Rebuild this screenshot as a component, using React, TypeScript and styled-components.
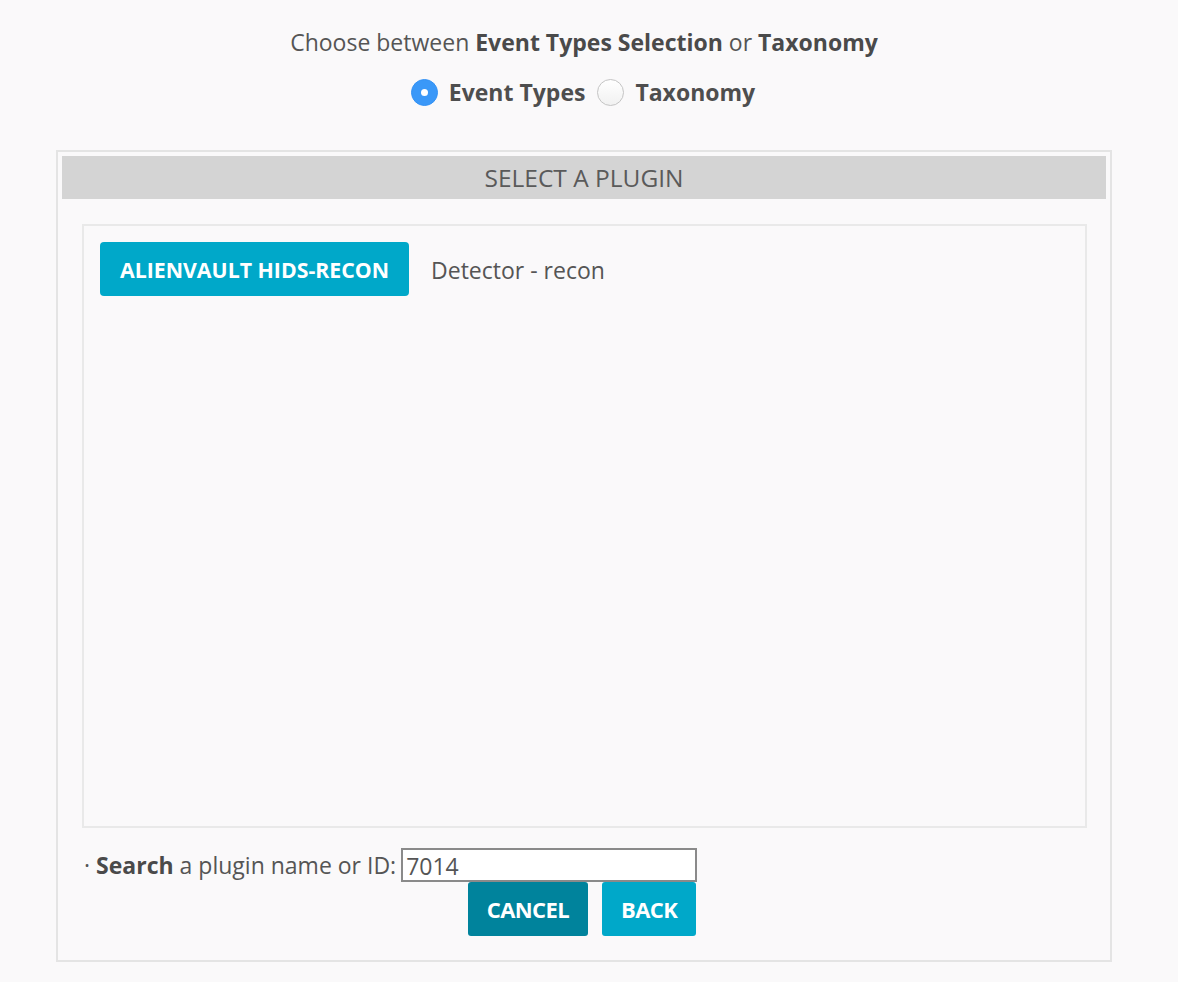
import React from "react";
import styled, { createGlobalStyle } from "styled-components";

const Global = createGlobalStyle`
  html, body { margin: 0; padding: 0; background: #faf9fa; }
  body { font-family: "Open Sans", "DejaVu Sans", sans-serif; color: #555; }
`;

const Page = styled.div`
  width: 1056px;
  margin-left: 56px;
  padding-top: 26px;
  padding-bottom: 20px;
`;

const Title = styled.div`
  text-align: center;
  font-size: 23px;
  line-height: 32px;
  color: #555;
  b { font-weight: 700; color: #4a4a4a; }
`;

const RadioRow = styled.div`
  display: flex;
  justify-content: center;
  align-items: center;
  gap: 12px;
  margin-top: 18px;
  height: 32px;
  margin-left: -2px;
`;

const RadioLabel = styled.label`
  display: flex;
  align-items: center;
  gap: 11px;
  font-size: 23px;
  line-height: 32px;
  font-weight: 700;
  color: #4e4e4e;
`;

const RadioDot = styled.span<{ $checked?: boolean }>`
  width: 27px;
  height: 27px;
  border-radius: 50%;
  box-sizing: border-box;
  display: inline-flex;
  align-items: center;
  justify-content: center;
  background: ${(p) => (p.$checked ? "#3a98f8" : "linear-gradient(#ffffff, #f1f1f1)")};
  border: ${(p) => (p.$checked ? "1px solid #3392f5" : "1px solid #c4c4c4")};
  &::after {
    content: "";
    display: ${(p) => (p.$checked ? "block" : "none")};
    width: 7px;
    height: 7px;
    border-radius: 50%;
    background: #fff;
  }
`;

const Outer = styled.div`
  margin-top: 42px;
  border: 2px solid #e4e4e4;
  padding: 4px 4px 24px;
`;

const Header = styled.div`
  background: #d4d4d4;
  height: 43px;
  line-height: 43px;
  text-align: center;
  font-size: 24.5px;
  color: #5a5a5a;
  text-transform: uppercase;
`;

const Inner = styled.div`
  box-sizing: border-box;
  margin: 25px 19px 0 20px;
  border: 2px solid #e9e9e9;
  height: 604px;
  padding: 16px;
  display: flex;
  align-items: flex-start;
  gap: 22px;
`;

const PluginButton = styled.button`
  height: 54px;
  padding: 0 20px;
  border: none;
  border-radius: 4px;
  background: #00a8c9;
  color: #fff;
  font-family: inherit;
  font-size: 21.3px;
  font-weight: 700;
  cursor: pointer;
`;

const PluginDesc = styled.span`
  font-size: 23px;
  line-height: 56px;
  color: #555;
`;

const SearchRow = styled.div`
  display: flex;
  align-items: center;
  margin: 20px 0 0 22px;
  font-size: 23px;
  color: #555;
  b { font-weight: 700; color: #4a4a4a; margin: 0 6px 0 6px; }
`;

const SearchInput = styled.input`
  width: 296px;
  height: 34px;
  box-sizing: border-box;
  margin-left: 5px;
  border: 2px solid #8a8a8a;
  background: #fff;
  font-family: inherit;
  font-size: 23px;
  color: #555;
  padding: 2px 3px 0;
  outline: none;
`;

const Actions = styled.div`
  display: flex;
  justify-content: center;
  gap: 14px;
  margin-right: 4px;
`;

const ActionButton = styled.button<{ $dark?: boolean }>`
  height: 54px;
  padding: 0 19px;
  border: none;
  border-radius: 3px;
  background: ${(p) => (p.$dark ? "#00839c" : "#00a8c9")};
  color: #fff;
  font-family: inherit;
  font-size: 22px;
  font-weight: 700;
  letter-spacing: -0.6px;
  cursor: pointer;
`;

export default function App() {
  return (
    <>
      <Global />
      <Page>
        <Title>
          Choose between <b>Event Types Selection</b> or <b>Taxonomy</b>
        </Title>
        <RadioRow>
          <RadioLabel>
            <RadioDot $checked />
            Event Types
          </RadioLabel>
          <RadioLabel>
            <RadioDot />
            Taxonomy
          </RadioLabel>
        </RadioRow>
        <Outer>
          <Header>Select a plugin</Header>
          <Inner>
            <PluginButton>ALIENVAULT HIDS-RECON</PluginButton>
            <PluginDesc>Detector - recon</PluginDesc>
          </Inner>
          <SearchRow>
            ·<b>Search</b>a plugin name or ID:
            <SearchInput defaultValue="7014" />
          </SearchRow>
          <Actions>
            <ActionButton $dark>CANCEL</ActionButton>
            <ActionButton>BACK</ActionButton>
          </Actions>
        </Outer>
      </Page>
    </>
  );
}
